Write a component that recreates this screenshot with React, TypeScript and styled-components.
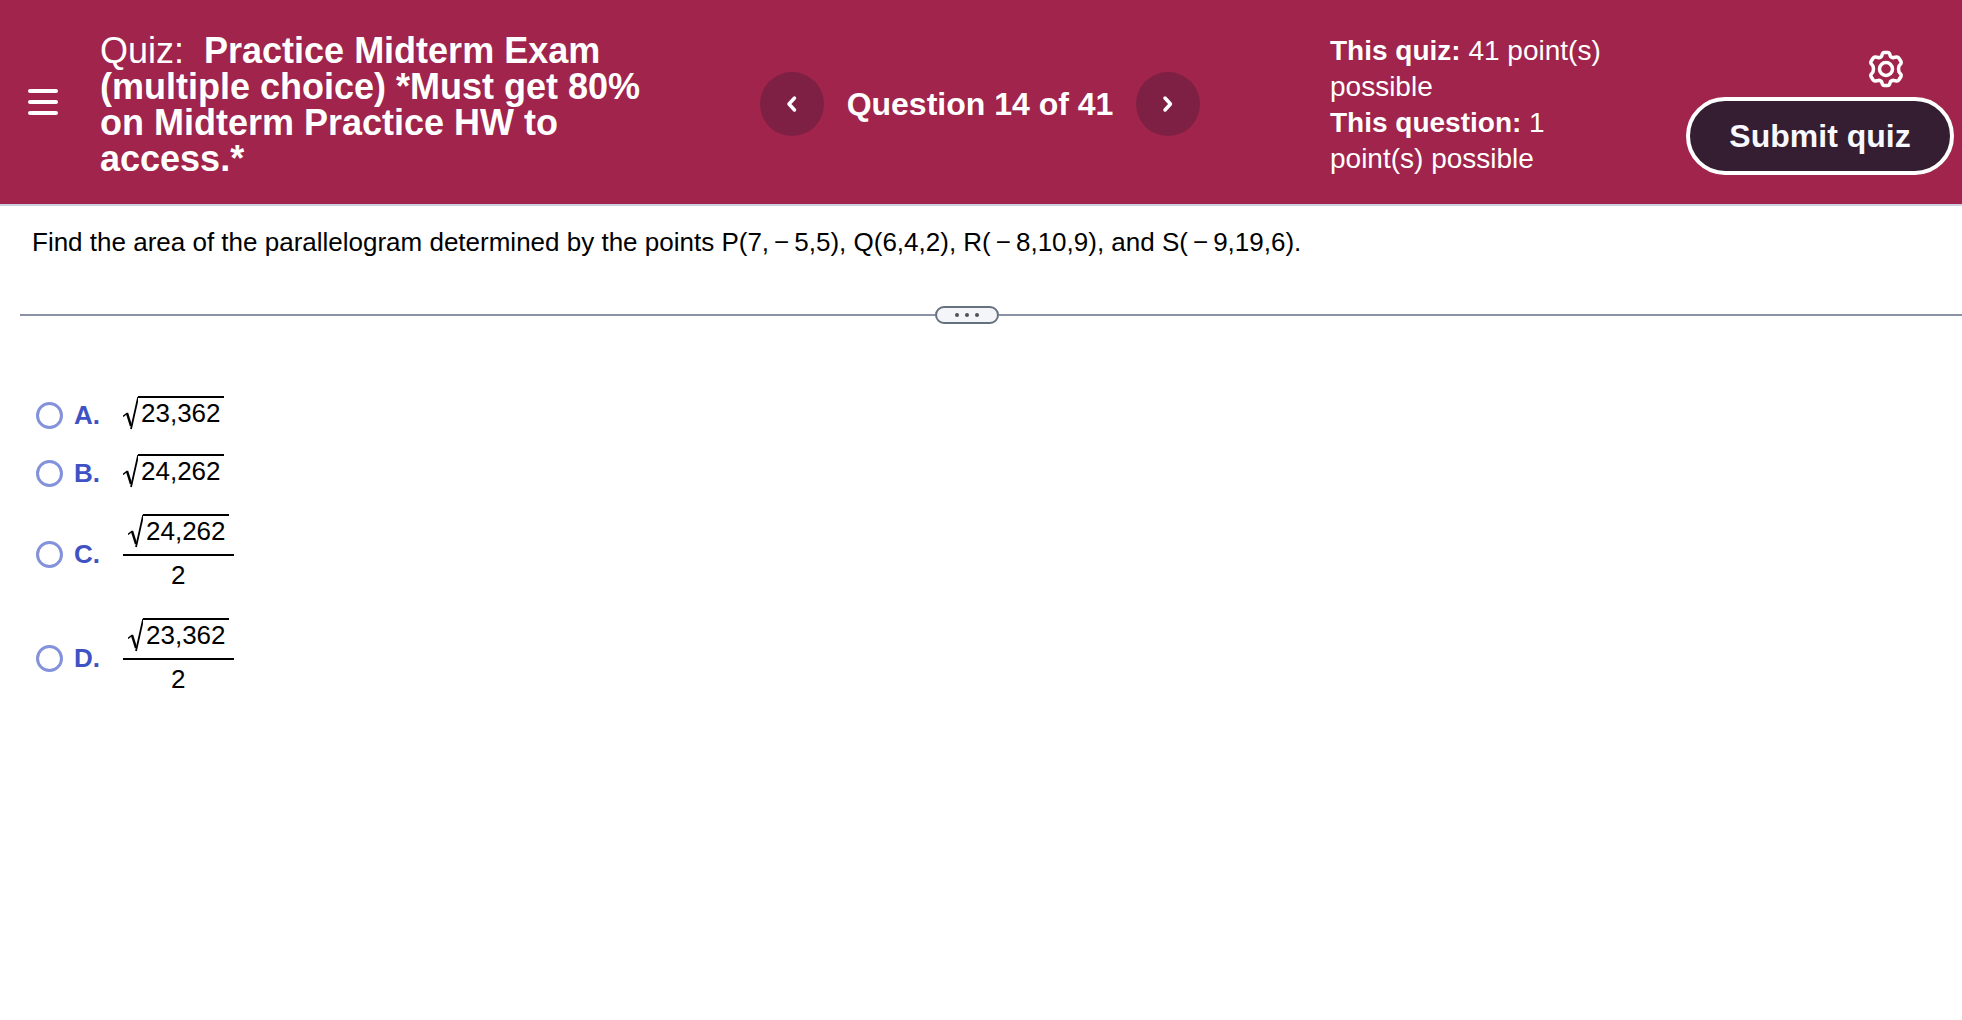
import React from 'react';
import styled, { createGlobalStyle, css } from 'styled-components';

const GlobalStyle = createGlobalStyle`
  *, *::before, *::after { box-sizing: border-box; }
  body {
    margin: 0;
    background: #fff;
    color: #000;
    font-family: "Liberation Sans", Arial, Helvetica, sans-serif;
  }
`;

const Header = styled.header`
  display: grid;
  grid-template-columns: 100px 556px minmax(0, 1fr) 324px 308px;
  min-height: 206px;
  background: #a0244b;
  color: #fff;
  border-bottom: 2px solid #ccd0e0;
`;

const IconButton = styled.button`
  display: flex;
  align-items: center;
  justify-content: center;
  padding: 0;
  border: 0;
  background: none;
  color: #fff;
  cursor: pointer;
`;

const MenuButton = styled(IconButton)`
  align-self: center;
  width: 86px;
  height: 64px;
`;

const Title = styled.h1`
  margin: 0;
  padding-top: 33px;
  font-size: 36px;
  line-height: 36px;
  font-weight: 700;
`;

const TitlePrefix = styled.span`
  font-weight: 400;
  white-space: pre;
`;

const Pager = styled.nav`
  display: flex;
  align-items: center;
  justify-content: center;
  gap: 23px;
  padding: 4px 26px 0 0;
`;

const RoundButton = styled(IconButton)`
  width: 64px;
  height: 64px;
  flex: none;
  border-radius: 50%;
  background: #7e2043;
`;

const PagerLabel = styled.h2`
  margin: 0;
  font-size: 32px;
  line-height: 36px;
  white-space: nowrap;
`;

const Points = styled.div`
  padding: 33px 44px 0 0;
  font-size: 28px;
  line-height: 36px;
`;

const Line = styled.p`
  margin: 0;
`;

const Actions = styled.div`
  display: flex;
  flex-direction: column;
  align-items: flex-end;
  padding: 46px 8px 0 0;
`;

const SettingsButton = styled(IconButton)`
  width: 52px;
  height: 46px;
  margin-right: 42px;
`;

const SubmitButton = styled.button`
  width: 268px;
  height: 78px;
  margin-top: 5px;
  border: 4px solid #fff;
  border-radius: 40px;
  background: #351e31;
  color: #f8f8ff;
  font: 700 32px/36px "Liberation Sans", Arial, Helvetica, sans-serif;
  white-space: nowrap;
  cursor: pointer;
`;

const Prompt = styled.p`
  margin: 0;
  padding: 20px 32px 0;
  font-size: 26px;
  line-height: 32px;
`;

const Minus = styled.span`
  padding: 0 5px;
`;

const Divider = styled.div`
  display: flex;
  align-items: center;
  height: 18px;
  margin: 48px 0 0 20px;
`;

const Rule = styled.div<{ $basis: number }>`
  flex: 1 1 ${(p) => p.$basis}px;
  height: 2px;
  background: #8b91a7;
`;

const Handle = styled.button`
  display: flex;
  align-items: center;
  justify-content: center;
  gap: 6px;
  width: 64px;
  height: 18px;
  padding: 0;
  border: 2px solid #66717f;
  border-radius: 9px;
  background: #f4f5f8;
  cursor: pointer;
`;

const Dot = styled.span`
  width: 4px;
  height: 4px;
  border-radius: 50%;
  background: #505258;
`;

const Choices = styled.fieldset`
  display: flex;
  flex-direction: column;
  margin: 0;
  padding: 62px 36px 0;
  border: 0;
`;

const Choice = styled.label<{ $tall?: boolean }>`
  display: grid;
  grid-template-columns: 38px 49px auto;
  justify-content: start;
  align-items: center;
  height: ${(p) => (p.$tall ? 104 : 58)}px;
  cursor: pointer;
`;

const Radio = styled.input`
  appearance: none;
  width: 27px;
  height: 27px;
  margin: 0;
  border: 3px solid #8492db;
  border-radius: 50%;
  background: #fff;

  &:checked { background: #3f52c4; }
`;

const Letter = styled.span`
  color: #3f52c4;
  font-size: 26px;
  line-height: 32px;
  font-weight: 700;
`;

const mathText = css`
  font-size: 26px;
  line-height: 30px;
`;

const MathValue = styled.span`
  padding-bottom: 4px;
`;

const Root = styled.span`
  display: flex;
  height: 34px;
  ${mathText}
`;

const Radicand = styled.span`
  padding: 0 3px;
  border-top: 2px solid #000;
`;

const Fraction = styled.span`
  display: flex;
  flex-direction: column;
  align-items: center;
  ${mathText}
`;

const Numerator = styled.span`
  padding: 0 5px 6px;
  border-bottom: 2px solid #000;
`;

const Denominator = styled.span`
  padding-top: 4px;
`;

function SquareRoot({ value }: { value: string }) {
  return (
    <Root>
      <svg width="15" height="34" viewBox="0 0 15 34" fill="none" stroke="#000" role="img" aria-label="square root of">
        <path d="M0 20.500L4.500 17" strokeWidth="1.500" />
        <path d="M4 17L8 30" strokeWidth="2.500" />
        <path d="M8 33L15.200 1" strokeWidth="1.800" />
      </svg>
      <Radicand>{value}</Radicand>
    </Root>
  );
}

const choices = [
  { letter: 'A', value: '23,362', half: false },
  { letter: 'B', value: '24,262', half: false },
  { letter: 'C', value: '24,262', half: true },
  { letter: 'D', value: '23,362', half: true },
];

export default function App() {
  return (
    <>
      <GlobalStyle />
      <Header>
        <MenuButton aria-label="Menu">
          <svg width="30" height="28" viewBox="0 0 30 28" stroke="currentColor" strokeWidth="4" strokeLinecap="round">
            <path d="M2 3H28M2 14H28M2 25H28" />
          </svg>
        </MenuButton>
        <Title>
          <TitlePrefix>{'Quiz:  '}</TitlePrefix>
          Practice Midterm Exam (multiple choice) *Must get 80% on Midterm Practice HW to access.*
        </Title>
        <Pager aria-label="Questions">
          <RoundButton aria-label="Previous question">
            <svg width="12" height="18" viewBox="0 0 12 18" fill="none" stroke="currentColor" strokeWidth="3.500" strokeLinecap="round" strokeLinejoin="round">
              <path d="M8.500 3L3 9L8.500 15" />
            </svg>
          </RoundButton>
          <PagerLabel>Question 14 of 41</PagerLabel>
          <RoundButton aria-label="Next question">
            <svg width="12" height="18" viewBox="0 0 12 18" fill="none" stroke="currentColor" strokeWidth="3.500" strokeLinecap="round" strokeLinejoin="round">
              <path d="M3 3L8.500 9L3 15" />
            </svg>
          </RoundButton>
        </Pager>
        <Points>
          <Line><b>This quiz:</b> 41 point(s) possible</Line>
          <Line><b>This question:</b> 1 point(s) possible</Line>
        </Points>
        <Actions>
          <SettingsButton aria-label="Settings">
            <svg width="36" height="38" viewBox="0 0 36 38" fill="none" stroke="currentColor" strokeWidth="3.500" strokeLinejoin="round">
              <path d="M14.5 3.5Q15 2.500 16 2.500H20Q21 2.500 21.500 3.500L22.500 6.500Q24 8 26 7.500L28.500 7Q30 6.800 30.800 8L33 11.500Q33.500 12.500 33 13.500L31 16Q30 19 31 22L33 24.500Q33.500 25.500 33 26.500L30.800 30Q30 31.200 28.500 31L26 30.500Q24 30 22.500 31.500L21.500 34.500Q21 35.500 20 35.500H16Q15 35.500 14.500 34.500L13.500 31.500Q12 30 10 30.500L7.500 31Q6 31.200 5.200 30L3 26.500Q2.500 25.500 3 24.500L5 22Q6 19 5 16L3 13.500Q2.500 12.500 3 11.500L5.200 8Q6 6.800 7.500 7L10 7.500Q12 8 13.500 6.500Z" />
              <circle cx="18" cy="19" r="6.500" />
            </svg>
          </SettingsButton>
          <SubmitButton>Submit quiz</SubmitButton>
        </Actions>
      </Header>
      <main>
        <Prompt>
          Find the area of the parallelogram determined by the points P(7,<Minus>−</Minus>5,5), Q(6,4,2), R(<Minus>−</Minus>8,10,9), and S(<Minus>−</Minus>9,19,6).
        </Prompt>
        <Divider>
          <Rule $basis={0} />
          <Handle aria-label="Resize panels">
            <Dot />
            <Dot />
            <Dot />
          </Handle>
          <Rule $basis={48} />
        </Divider>
        <Choices aria-label="Answer choices">
          {choices.map(({ letter, value, half }) => (
            <Choice key={letter} $tall={half}>
              <Radio type="radio" name="answer" value={letter} />
              <Letter>{letter}.</Letter>
              <MathValue>
                {half ? (
                  <Fraction>
                    <Numerator>
                      <SquareRoot value={value} />
                    </Numerator>
                    <Denominator>2</Denominator>
                  </Fraction>
                ) : (
                  <SquareRoot value={value} />
                )}
              </MathValue>
            </Choice>
          ))}
        </Choices>
      </main>
    </>
  );
}
